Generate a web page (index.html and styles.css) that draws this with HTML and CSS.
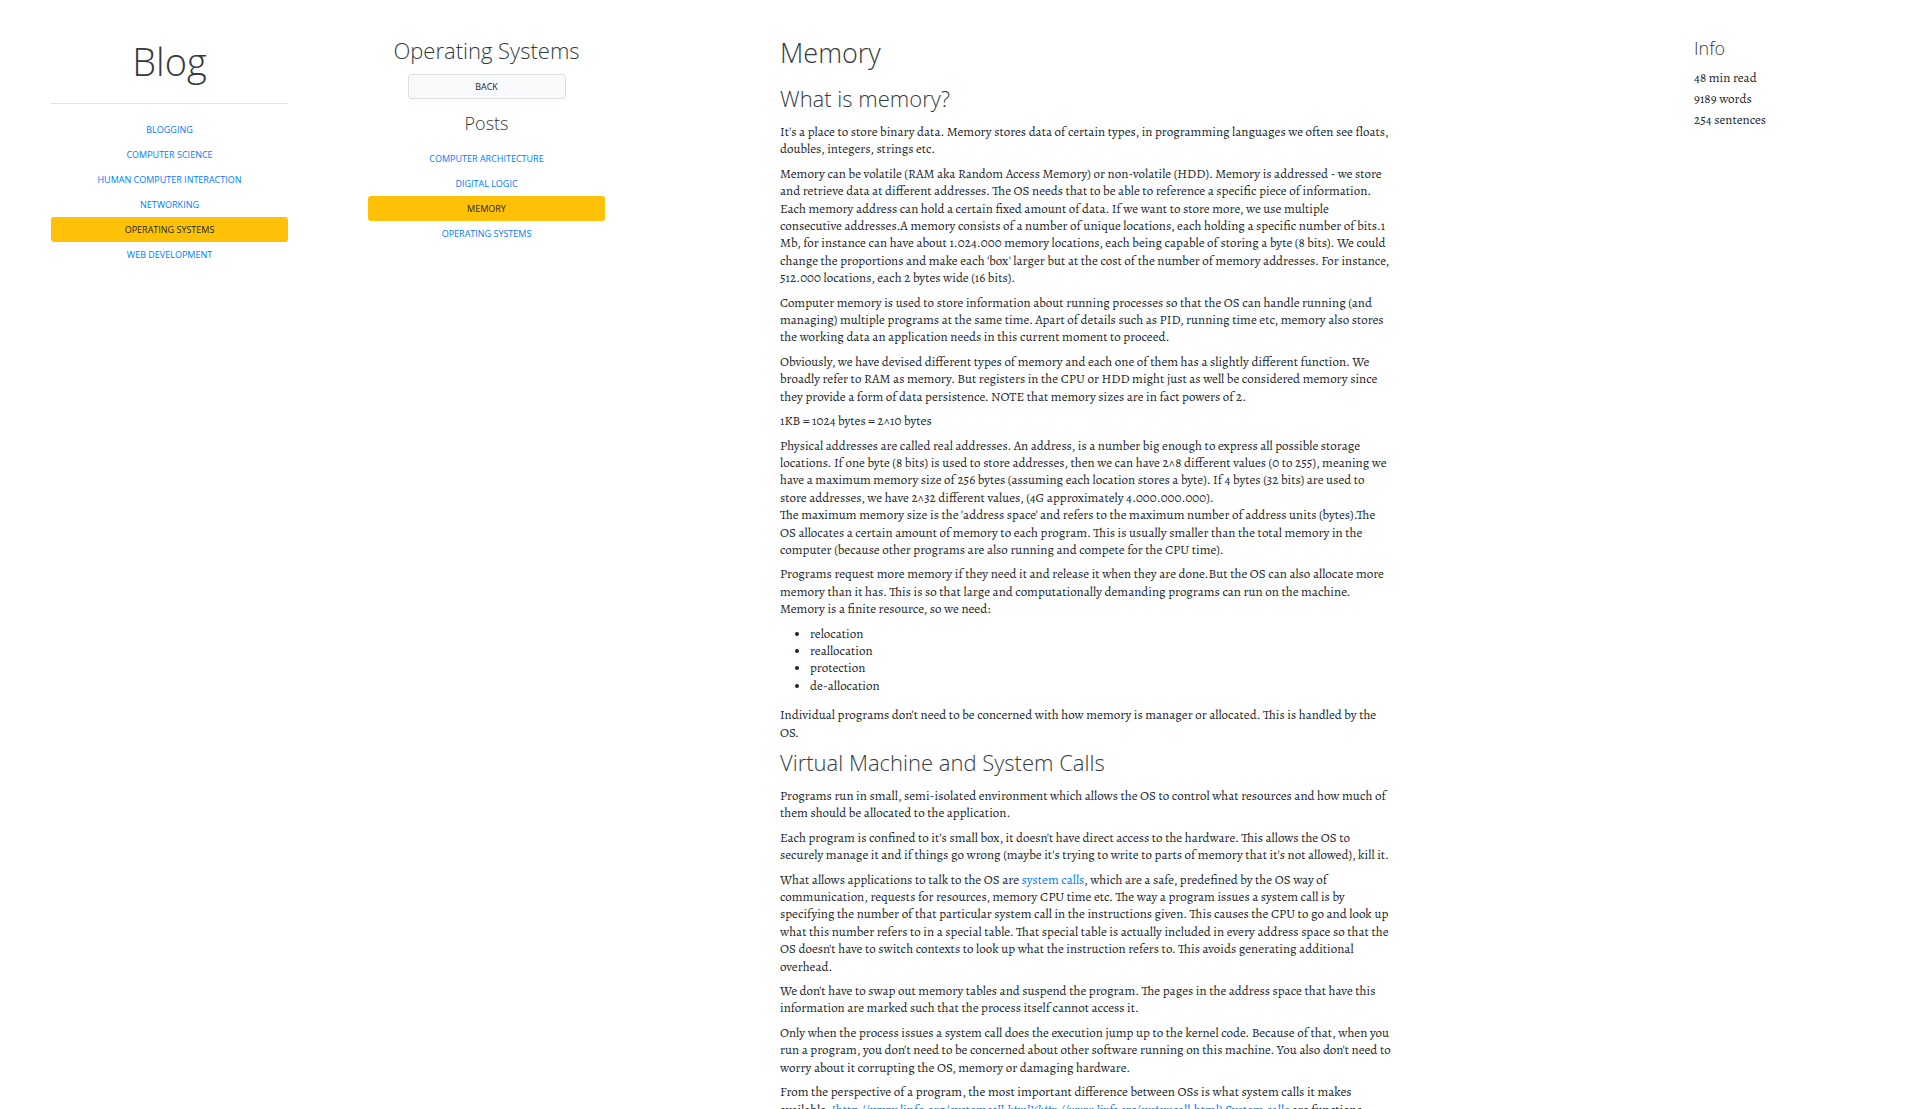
FILE: index.html
```html
<!DOCTYPE html>
<html lang="en">
<head>
<meta charset="utf-8">
<title>Memory - Blog</title>
<link rel="stylesheet" href="styles.css">
</head>
<body>
<div class="page">
  <nav class="sidebar" aria-label="Categories">
    <h1 class="brand">Blog</h1>
    <hr class="rule">
    <ul class="links">
      <li><a class="link" href="#">Blogging</a></li>
      <li><a class="link" href="#">Computer Science</a></li>
      <li><a class="link" href="#">Human Computer Interaction</a></li>
      <li><a class="link" href="#">Networking</a></li>
      <li><a class="link active" href="#">Operating Systems</a></li>
      <li><a class="link" href="#">Web Development</a></li>
    </ul>
  </nav>
  <nav class="sidebar posts" aria-label="Posts">
    <h2 class="title">Operating Systems</h2>
    <button class="back" type="button">Back</button>
    <h3 class="subtitle">Posts</h3>
    <ul class="links">
      <li><a class="link" href="#">Computer Architecture</a></li>
      <li><a class="link" href="#">Digital Logic</a></li>
      <li><a class="link active" href="#">Memory</a></li>
      <li><a class="link" href="#">Operating Systems</a></li>
    </ul>
  </nav>
  <main class="article">
    <h1 class="headline">Memory</h1>
    <h2 class="title">What is memory?</h2>
    <p>It's a place to store binary data. Memory stores data of certain types, in programming languages we often see floats,<br>doubles, integers, strings etc.</p>
    <p>Memory can be volatile (RAM aka Random Access Memory) or non-volatile (HDD). Memory is addressed - we store<br>and retrieve data at different addresses. The OS needs that to be able to reference a specific piece of information.<br>Each memory address can hold a certain fixed amount of data. If we want to store more, we use multiple<br>consecutive addresses.A memory consists of a number of unique locations, each holding a specific number of bits.1<br>Mb, for instance can have about 1.024.000 memory locations, each being capable of storing a byte (8 bits). We could<br>change the proportions and make each 'box' larger but at the cost of the number of memory addresses. For instance,<br>512.000 locations, each 2 bytes wide (16 bits).</p>
    <p>Computer memory is used to store information about running processes so that the OS can handle running (and<br>managing) multiple programs at the same time. Apart of details such as PID, running time etc, memory also stores<br>the working data an application needs in this current moment to proceed.</p>
    <p>Obviously, we have devised different types of memory and each one of them has a slightly different function. We<br>broadly refer to RAM as memory. But registers in the CPU or HDD might just as well be considered memory since<br>they provide a form of data persistence. NOTE that memory sizes are in fact powers of 2.</p>
    <p>1KB = 1024 bytes = 2^10 bytes</p>
    <p>Physical addresses are called real addresses. An address, is a number big enough to express all possible storage<br>locations. If one byte (8 bits) is used to store addresses, then we can have 2^8 different values (0 to 255), meaning we<br>have a maximum memory size of 256 bytes (assuming each location stores a byte). If 4 bytes (32 bits) are used to<br>store addresses, we have 2^32 different values, (4G approximately 4.000.000.000).<br>The maximum memory size is the 'address space' and refers to the maximum number of address units (bytes).The<br>OS allocates a certain amount of memory to each program. This is usually smaller than the total memory in the<br>computer (because other programs are also running and compete for the CPU time).</p>
    <p>Programs request more memory if they need it and release it when they are done.But the OS can also allocate more<br>memory than it has. This is so that large and computationally demanding programs can run on the machine.<br>Memory is a finite resource, so we need:</p>
    <ul class="bullets">
      <li>relocation</li>
      <li>reallocation</li>
      <li>protection</li>
      <li>de-allocation</li>
    </ul>
    <p>Individual programs don't need to be concerned with how memory is manager or allocated. This is handled by the<br>OS.</p>
    <h2 class="title">Virtual Machine and System Calls</h2>
    <p>Programs run in small, semi-isolated environment which allows the OS to control what resources and how much of<br>them should be allocated to the application.</p>
    <p>Each program is confined to it's small box, it doesn't have direct access to the hardware. This allows the OS to<br>securely manage it and if things go wrong (maybe it's trying to write to parts of memory that it's not allowed), kill it.</p>
    <p>What allows applications to talk to the OS are <a href="#">system calls</a>, which are a safe, predefined by the OS way of<br>communication, requests for resources, memory CPU time etc. The way a program issues a system call is by<br>specifying the number of that particular system call in the instructions given. This causes the CPU to go and look up<br>what this number refers to in a special table. That special table is actually included in every address space so that the<br>OS doesn't have to switch contexts to look up what the instruction refers to. This avoids generating additional<br>overhead.</p>
    <p>We don't have to swap out memory tables and suspend the program. The pages in the address space that have this<br>information are marked such that the process itself cannot access it.</p>
    <p>Only when the process issues a system call does the execution jump up to the kernel code. Because of that, when you<br>run a program, you don't need to be concerned about other software running on this machine. You also don't need to<br>worry about it corrupting the OS, memory or damaging hardware.</p>
    <p>From the perspective of a program, the most important difference between OSs is what system calls it makes<br>available. <a href="#">[http://www.linfo.org/system<em>call.html](http://www.linfo.org/system</em>call.html) System calls</a> are functions</p>
  </main>
  <aside class="info">
    <h3 class="subtitle">Info</h3>
    <ul class="stats">
      <li>48 min read</li>
      <li>9189 words</li>
      <li>254 sentences</li>
    </ul>
  </aside>
</div>
</body>
</html>
```
FILE: styles.css
```css
* {
  box-sizing: border-box;
}

body {
  margin: 0;
  background: #fff;
  color: #212529;
  font: 13px/1.34 Alegreya, "Liberation Serif", serif;
}

.page {
  display: grid;
  grid-template-columns: 317fr 317fr 1049fr 226fr;
  height: 100vh;
  padding: 36px 0 0 11px;
  overflow: hidden auto;
  scrollbar-width: none;
}

h1, h2, h3 {
  margin: 0;
  color: #343a40;
  font-family: "Segoe UI", "Open Sans", sans-serif;
  font-weight: 300;
}

a {
  color: #007bff;
  text-decoration: none;
}

ul {
  margin: 0;
  padding: 0;
  list-style: none;
}

.sidebar {
  padding: 0 40px;
  text-align: center;
}

.brand {
  font-size: 38px;
  line-height: 50px;
}

.rule {
  margin: 17px 0 13px;
  border: 0;
  border-top: 1px solid #e2e2e2;
}

.link,
.back {
  display: block;
  border: 1px solid transparent;
  border-radius: 3px;
  font: 500 9px/23px "Segoe UI", "Open Sans", sans-serif;
  text-transform: uppercase;
}

.link.active {
  background: #ffc107;
  color: #212529;
}

.title {
  font-size: 22px;
  line-height: 29px;
}

.subtitle {
  font-size: 18px;
  line-height: 25px;
}

.back {
  width: 158px;
  margin: 9px auto 12px;
  padding: 0;
  border-color: #dadfe3;
  background: #f8f9fa;
  color: #212529;
}

.posts .links {
  margin-top: 10px;
}

.article {
  padding-left: 135px;
  white-space: nowrap;
}

.headline {
  margin-bottom: 14px;
  font-size: 27px;
  line-height: 34px;
}

.article .title {
  margin-bottom: 10px;
}

.article p {
  margin: 0 0 7px;
}

.bullets {
  margin-bottom: 12px;
  padding-left: 30px;
  list-style: disc;
}

.stats {
  margin-top: 6px;
  line-height: 21px;
}
```
